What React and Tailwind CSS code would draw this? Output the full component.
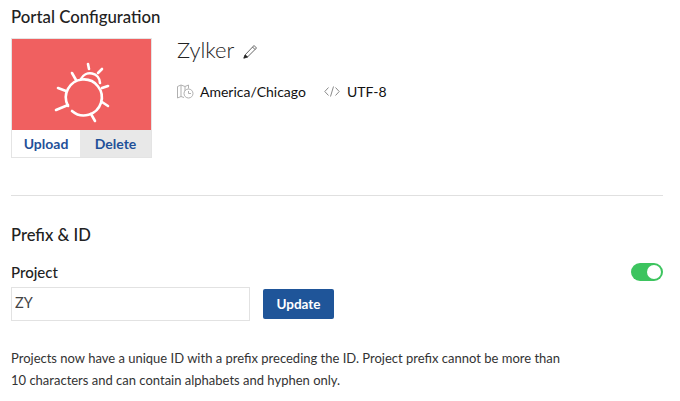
const font = { fontFamily: "Lato, sans-serif" };

function BugLogo() {
    return (
        <svg width="62" height="66" viewBox="0 0 62 66" fill="none" stroke="white" strokeWidth="2.6" strokeLinecap="round">
            <path d="M17 47 A18 18 0 1 1 21 52" />
            <path d="M30 20 A10 10 0 0 1 49 24" />
            <path d="M5 51 L17 46" />
            <path d="M7 29 L15 32" />
            <path d="M21 14 L25 21" />
            <path d="M37 5 L38 10" />
            <path d="M51 10 L47 14" />
            <path d="M57 27 L51 29" />
            <path d="M57 47 L51 43" />
            <path d="M44 62 L40 55" />
        </svg>
    );
}

function PencilIcon() {
    return (
        <svg width="15" height="15" viewBox="0 0 15 15" fill="none" stroke="#555555" strokeWidth="0.9" strokeLinejoin="round">
            <path d="M2 11 L11 1.5 L13.5 4 L4.5 13 Z" />
            <path d="M9.5 3 L12 5.5" />
            <path d="M0.8 14.2 L2 11 L4.5 13 Z" fill="#222222" stroke="#222222" />
        </svg>
    );
}

function ClockMapIcon() {
    return (
        <svg width="17" height="15" viewBox="0 0 17 15" fill="none" stroke="#b0b0b0" strokeWidth="1">
            <path d="M0.5 2.5 L4 1 L8 2.5 L11.5 1 V4.5" />
            <path d="M0.5 2.5 V14 L4 12.5 L7 13.5" />
            <path d="M4 1 V12.5 M8 2.5 V7" />
            <circle cx="11.5" cy="9.5" r="4.5" />
            <path d="M11.5 7 V9.5 H14" />
        </svg>
    );
}

function CodeIcon() {
    return (
        <svg width="16" height="11" viewBox="0 0 16 11" fill="none" stroke="#8a8a8a" strokeWidth="1">
            <path d="M4.5 1.5 L0.8 5.5 L4.5 9.5" />
            <path d="M9.5 0.5 L6.5 10.5" />
            <path d="M11.5 1.5 L15.2 5.5 L11.5 9.5" />
        </svg>
    );
}

export default function App() {
    return (
        <div className="h-[401px] w-[680px] overflow-hidden bg-white pl-[11px] pr-[17px] pt-[8px] text-[#222222]" style={font}>
            <h1 className="text-[16.8px] leading-[18px] font-medium">Portal Configuration</h1>

            <div className="mt-[12px] flex">
                <div className="w-[141px] border border-[#e4e4e4]">
                    <div className="flex h-[91px] justify-center bg-[#f06060] pt-[20px]">
                        <BugLogo />
                    </div>
                    <div className="flex h-[27px] text-[14px] font-bold text-[#1f5199]">
                        <div className="flex w-[68px] items-center justify-center bg-white">Upload</div>
                        <div className="flex flex-1 items-center justify-center bg-[#e8e8e8]">Delete</div>
                    </div>
                </div>

                <div className="ml-[25px]">
                    <div className="flex items-center">
                        <span className="text-[22px] leading-[24px] font-light">Zylker</span>
                        <span className="ml-[9px] mt-[2px]"><PencilIcon /></span>
                    </div>
                    <div className="mt-[19px] flex items-center text-[14px] font-normal text-[#111111]">
                        <ClockMapIcon />
                        <span className="ml-[6px]">America/Chicago</span>
                        <span className="ml-[18px]"><CodeIcon /></span>
                        <span className="ml-[7px]">UTF-8</span>
                    </div>
                </div>
            </div>

            <hr className="mt-[37px] border-[#e0e0e0]" />

            <h2 className="mt-[30px] text-[16.6px] leading-[18px] font-medium">Prefix &amp; ID</h2>

            <div className="mt-[19px] flex items-center justify-between">
                <span className="text-[15px] leading-[18px] font-medium">Project</span>
                <div className="relative h-[18px] w-[32px] rounded-full bg-[#3dc45f]">
                    <span className="absolute right-[2px] top-[2px] h-[14px] w-[14px] rounded-full bg-white" />
                </div>
            </div>

            <div className="mt-[6px] flex items-center">
                <input
                    readOnly
                    value="ZY"
                    className="h-[34px] w-[239px] border border-[#e2e2e2] pl-[3px] pb-[3px] text-[14.5px] text-[#444444] outline-none"
                    style={font}
                />
                <button className="ml-[13px] h-[30px] w-[71px] rounded-[2px] bg-[#1f5599] text-[13.5px] font-bold text-white">
                    Update
                </button>
            </div>

            <p className="mt-[26px] text-[13px] leading-[22px] text-[#333333]">
                Projects now have a unique ID with a prefix preceding the ID. Project prefix cannot be more than
                <br />
                10 characters and can contain alphabets and hyphen only.
            </p>
        </div>
    );
}
